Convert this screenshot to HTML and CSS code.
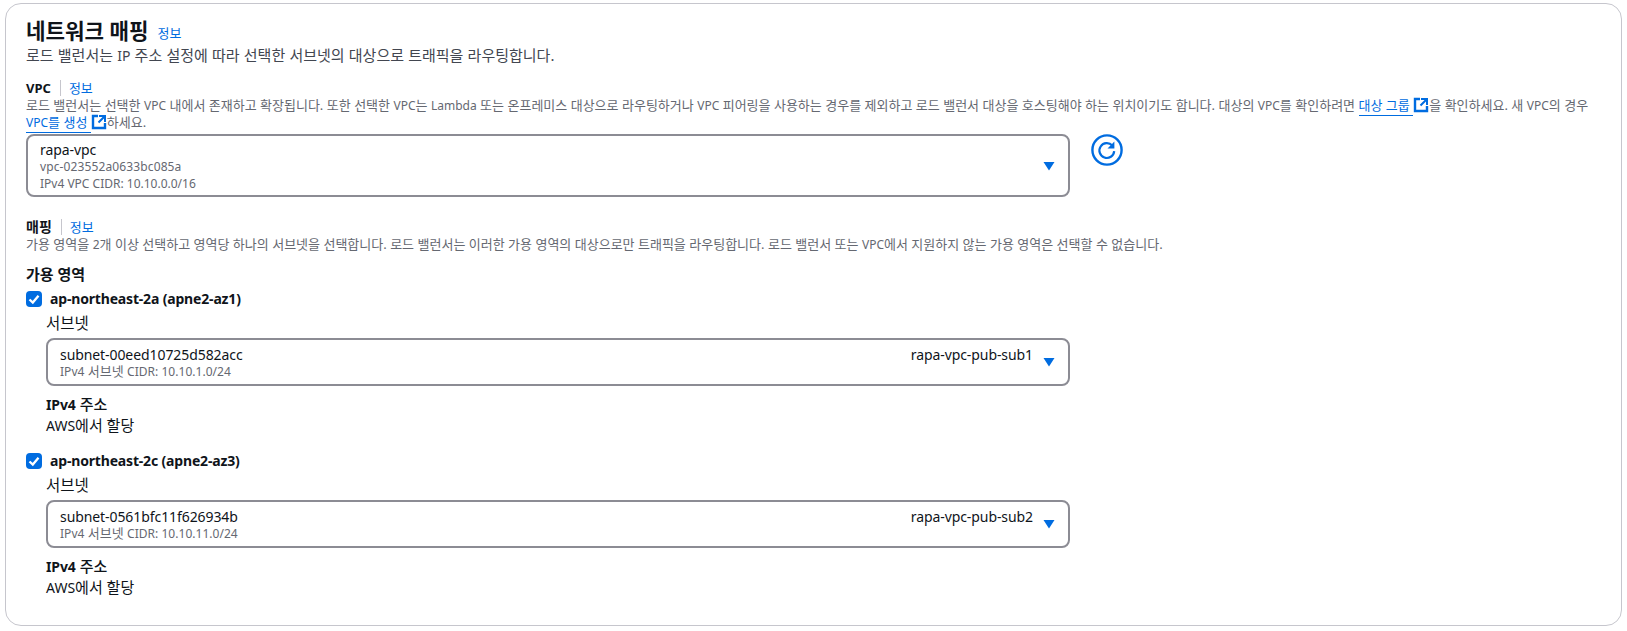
FILE: index.html
```html
<!DOCTYPE html>
<html lang="ko">
<head>
<meta charset="utf-8">
<title>네트워크 매핑</title>
<link rel="stylesheet" href="styles.css">
</head>
<body>
<svg class="defs" width="0" height="0" aria-hidden="true">
  <symbol id="ext" viewBox="0 0 16 16"><path d="M7 2H2v12h12V9" fill="none" stroke="currentColor" stroke-width="2.4"/><path d="M8 2h6v6M14 2 7.5 8.5" fill="none" stroke="currentColor" stroke-width="2"/></symbol>
  <symbol id="caret" viewBox="0 0 12 10"><path d="M0.5 1h11L6 9.5z" fill="currentColor"/></symbol>
  <symbol id="check" viewBox="0 0 16 16"><path d="M3.5 8.5 6.8 11.6 12.5 4.8" fill="none" stroke="#fff" stroke-width="2.3"/></symbol>
</svg>
<section class="panel">
  <header class="head">
    <h2 class="title">네트워크 매핑</h2>
    <a class="info info-title">정보</a>
  </header>
  <p class="lead">로드 밸런서는 <span class="lat">IP</span> 주소 설정에 따라 선택한 서브넷의 대상으로 트래픽을 라우팅합니다.</p>

  <div class="field-label vpc-label"><b class="lat">VPC</b><span class="sep"></span><a class="info">정보</a></div>
  <p class="hint">로드 밸런서는 선택한 <span class="lat">VPC</span> 내에서 존재하고 확장됩니다. 또한 선택한 <span class="lat">VPC</span>는 <span class="lat">Lambda</span> 또는 온프레미스 대상으로 라우팅하거나 <span class="lat">VPC</span> 피어링을 사용하는 경우를 제외하고 로드 밸런서 대상을 호스팅해야 하는 위치이기도 합니다. 대상의 <span class="lat">VPC</span>를 확인하려면 <a class="ext-link">대상 그룹&nbsp;</a><svg class="ext"><use href="#ext"/></svg>을 확인하세요. 새 <span class="lat">VPC</span>의 경우 <a class="ext-link"><span class="lat">VPC</span>를 생성&nbsp;</a><svg class="ext"><use href="#ext"/></svg>하세요.</p>

  <div class="vpc-row">
    <div class="select select-vpc">
      <div class="select-text">
        <div class="opt">rapa-vpc</div>
        <div class="sub">vpc-023552a0633bc085a</div>
        <div class="sub">IPv4 VPC CIDR: 10.10.0.0/16</div>
      </div>
      <svg class="caret"><use href="#caret"/></svg>
    </div>
    <button class="refresh" aria-label="새로 고침">
      <svg viewBox="0 0 32 32" width="32" height="32"><circle cx="16" cy="16" r="14.6" fill="none" stroke="currentColor" stroke-width="2.4"/><path d="M21.3 11.6a7.4 7.4 0 1 0 1.9 5.6" fill="none" stroke="currentColor" stroke-width="2.2"/><path d="M23.4 7.6v6.9h-6.9z" fill="currentColor"/></svg>
    </button>
  </div>

  <div class="field-label map-label"><b>매핑</b><span class="sep"></span><a class="info">정보</a></div>
  <p class="hint hint-map">가용 영역을 <span class="lat">2</span>개 이상 선택하고 영역당 하나의 서브넷을 선택합니다. 로드 밸런서는 이러한 가용 영역의 대상으로만 트래픽을 라우팅합니다. 로드 밸런서 또는 <span class="lat">VPC</span>에서 지원하지 않는 가용 영역은 선택할 수 없습니다.</p>

  <h3 class="az-title">가용 영역</h3>

  <div class="az">
    <div class="az-check"><span class="box"><svg width="16" height="16"><use href="#check"/></svg></span><b>ap-northeast-2a (apne2-az1)</b></div>
    <div class="az-body">
      <div class="sub-label">서브넷</div>
      <div class="select select-sub">
        <div class="select-text">
          <div class="opt">subnet-00eed10725d582acc</div>
          <div class="sub"><span class="lat">IPv4</span> 서브넷 <span class="lat">CIDR: 10.10.1.0/24</span></div>
        </div>
        <div class="opt tag">rapa-vpc-pub-sub1</div>
        <svg class="caret"><use href="#caret"/></svg>
      </div>
      <div class="addr-label"><b class="lat">IPv4</b> <b class="ko">주소</b></div>
      <div class="addr-value"><span class="lat">AWS</span>에서 할당</div>
    </div>
  </div>

  <div class="az az-second">
    <div class="az-check"><span class="box"><svg width="16" height="16"><use href="#check"/></svg></span><b>ap-northeast-2c (apne2-az3)</b></div>
    <div class="az-body">
      <div class="sub-label">서브넷</div>
      <div class="select select-sub">
        <div class="select-text">
          <div class="opt">subnet-0561bfc11f626934b</div>
          <div class="sub"><span class="lat">IPv4</span> 서브넷 <span class="lat">CIDR: 10.10.11.0/24</span></div>
        </div>
        <div class="opt tag">rapa-vpc-pub-sub2</div>
        <svg class="caret"><use href="#caret"/></svg>
      </div>
      <div class="addr-label"><b class="lat">IPv4</b> <b class="ko">주소</b></div>
      <div class="addr-value"><span class="lat">AWS</span>에서 할당</div>
    </div>
  </div>
</section>
</body>
</html>
```
FILE: styles.css
```css
* { box-sizing: border-box; }
html, body { margin: 0; padding: 0; background: #fff; }
body {
  padding: 3px 5px 0;
  height: 631px;
  overflow: hidden;
  font-family: "Noto Sans", "Noto Sans CJK KR", sans-serif;
  font-size: 14px;
  line-height: 20px;
  color: #0f141a;
}
.defs { position: absolute; }
.panel {
  height: 623px;
  border: 1px solid #c6c6cd;
  border-radius: 16px;
  padding: 15px 20px 0;
}
.head { display: flex; align-items: center; gap: 9px; height: 24px; }
.title { margin: 0; font-size: 21.2px; line-height: 24px; font-weight: 700; }
.info { color: #006ce0; font-size: 13px; line-height: 16px; }
.info-title { margin-top: 3px; }
.lead { margin: 2px 0 0; font-size: 15px; line-height: 20px; color: #424650; word-spacing: 0.3px; }
.lead .lat { font-size: 14px; }
.field-label { display: flex; align-items: center; height: 18px; font-size: 14px; }
.field-label b { font-weight: 700; }
.field-label .lat { font-size: 13px; }
.vpc-label { margin-top: 13px; }
.map-label { margin-top: 21px; }
.sep { width: 1px; height: 16px; background: #c6c6cd; margin: 0 8px 0 9px; }
.hint { margin: 0; font-size: 13px; line-height: 16px; color: #656871; word-spacing: 0.06px; }
.hint-map { word-spacing: 0.05px; }
.hint .lat { font-size: 12px; }
.ext-link { color: #006ce0; border-bottom: 1px solid #006ce0; padding-bottom: 1px; }
.ext { width: 16px; height: 16px; color: #006ce0; vertical-align: -3px; }
.vpc-row { display: flex; align-items: flex-start; gap: 21px; margin-top: 3px; }
.select {
  display: flex;
  align-items: center;
  border: 2px solid #8c8c94;
  border-radius: 8px;
  padding: 0 12px;
  color: #0f141a;
}
.select-vpc { width: 1044px; height: 63px; }
.select-sub { height: 48px; }
.select-text { flex: 1; padding-top: 2px; }
.opt { font-size: 14px; line-height: 17px; letter-spacing: -0.08px; }
.sub { font-size: 12px; line-height: 17px; color: #656871; letter-spacing: 0.12px; }
.sub + .sub { letter-spacing: 0; }
.sub:has(.lat) { font-size: 13px; letter-spacing: 0; }
.sub .lat { font-size: 12px; letter-spacing: 0.03px; }
.tag { margin-right: 5px; align-self: flex-start; margin-top: 6px; }
.caret { width: 12px; height: 10px; color: #006ce0; margin-left: 5px; margin-right: 1px; }
.refresh { width: 32px; height: 32px; padding: 0; border: 0; background: none; color: #006ce0; }
.refresh svg { display: block; }
.az-title { margin: 11px 0 0; font-size: 15px; line-height: 20px; font-weight: 700; }
.az { margin-top: 5px; width: 1044px; }
.az-second { margin-top: 15px; }
.az-check { display: flex; align-items: center; gap: 8px; height: 20px; font-size: 14px; letter-spacing: -0.17px; }
.box { width: 16px; height: 16px; border-radius: 4px; background: #006ce0; }
.box svg { display: block; }
.az-body { padding-left: 20px; }
.sub-label { margin-top: 4px; font-size: 15.5px; line-height: 20px; }
.select-sub { margin-top: 5px; }
.addr-label { margin-top: 8px; line-height: 20px; font-size: 15px; }
.addr-label .lat { font-size: 14px; font-weight: 700; letter-spacing: -0.1px; }
.addr-label .ko { font-weight: 500; }
.addr-value { line-height: 20px; font-size: 15px; }
.addr-value .lat { font-size: 14px; }
```
